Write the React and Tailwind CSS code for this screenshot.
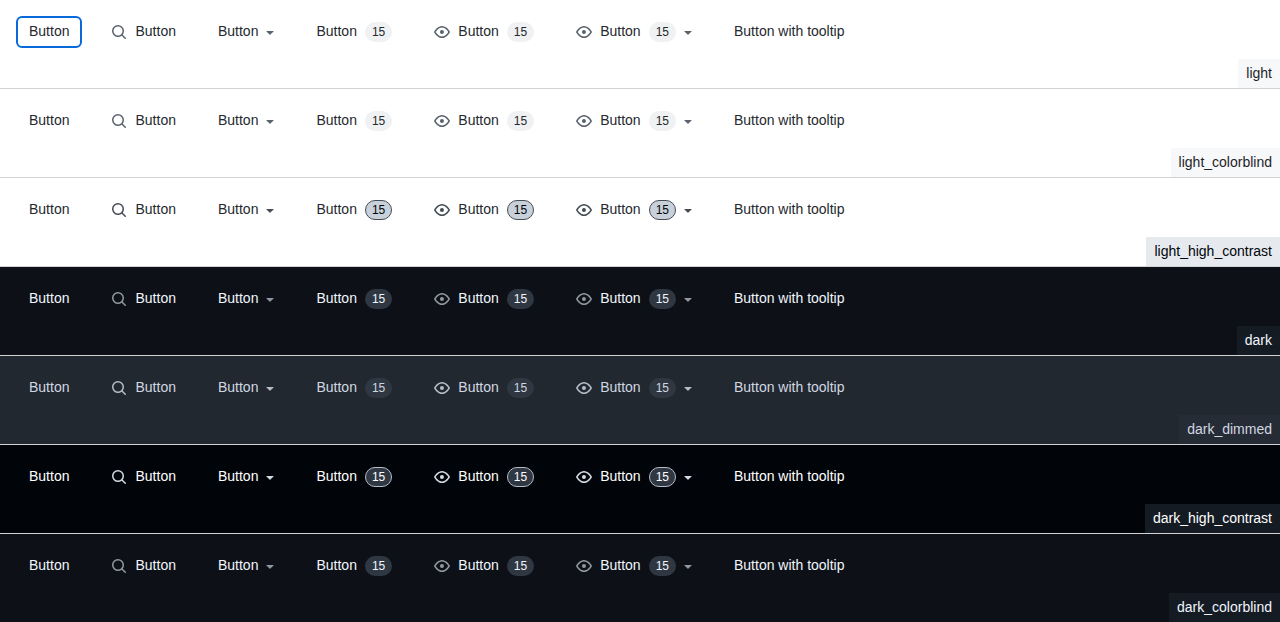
const themes = [
  { name: 'light', row: 'bg-white text-[#25292e]', icon: 'text-[#59636e]', counter: 'bg-[#eff1f2] border-transparent text-[#25292e]', label: 'bg-[#f6f8fa] text-[#1f2328]' },
  { name: 'light_colorblind', row: 'bg-white text-[#25292e]', icon: 'text-[#59636e]', counter: 'bg-[#eff1f2] border-transparent text-[#25292e]', label: 'bg-[#f6f8fa] text-[#1f2328]' },
  { name: 'light_high_contrast', row: 'bg-white text-[#25292e]', icon: 'text-[#454c54]', counter: 'bg-[#c8d1da] border-[#454c54] text-[#010409]', label: 'bg-[#e6eaef] text-[#010409]' },
  { name: 'dark', row: 'bg-[#0d1117] text-[#f0f6fc]', icon: 'text-[#9198a1]', counter: 'bg-[#2f3742] border-transparent text-[#f0f6fc]', label: 'bg-[#151b23] text-[#f0f6fc]' },
  { name: 'dark_dimmed', row: 'bg-[#212830] text-[#d1d7e0]', icon: 'text-[#b7bdc8]', counter: 'bg-[#2f3742] border-transparent text-[#d1d7e0]', label: 'bg-[#262c36] text-[#d1d7e0]' },
  { name: 'dark_high_contrast', row: 'bg-[#010409] text-white', icon: 'text-[#d4dbe3]', counter: 'bg-[#2f3742] border-[#b7bdc8] text-white', label: 'bg-[#151b23] text-white' },
  { name: 'dark_colorblind', row: 'bg-[#0d1117] text-[#f0f6fc]', icon: 'text-[#9198a1]', counter: 'bg-[#2f3742] border-transparent text-[#f0f6fc]', label: 'bg-[#151b23] text-[#f0f6fc]' },
];

const paths = {
  search: 'M10.68 11.74a6 6 0 0 1-7.922-8.982 6 6 0 0 1 8.982 7.922l3.04 3.04a.749.749 0 0 1-.326 1.275.749.749 0 0 1-.734-.215ZM11.5 7a4.499 4.499 0 1 0-8.997 0A4.499 4.499 0 0 0 11.5 7Z',
  eye: 'M8 2c1.981 0 3.671.992 4.933 2.078 1.27 1.091 2.187 2.345 2.637 3.023a1.62 1.62 0 0 1 0 1.798c-.45.678-1.367 1.932-2.637 3.023C11.67 13.008 9.981 14 8 14c-1.981 0-3.671-.992-4.933-2.078C1.797 10.83.88 9.576.43 8.898a1.62 1.62 0 0 1 0-1.798c.45-.677 1.367-1.931 2.637-3.022C4.33 2.992 6.019 2 8 2ZM1.679 7.932a.12.12 0 0 0 0 .136c.411.622 1.241 1.75 2.366 2.717C5.176 11.758 6.527 12.5 8 12.5c1.473 0 2.825-.742 3.955-1.715 1.124-.967 1.954-2.096 2.366-2.717a.12.12 0 0 0 0-.136c-.412-.621-1.242-1.75-2.366-2.717C10.824 4.242 9.473 3.5 8 3.5c-1.473 0-2.825.742-3.955 1.715-1.124.967-1.954 2.096-2.366 2.717ZM8 10a2 2 0 1 1-.001-3.999A2 2 0 0 1 8 10Z',
  caret: 'm4.427 7.427 3.396 3.396a.25.25 0 0 0 .354 0l3.396-3.396A.25.25 0 0 0 11.396 7H4.604a.25.25 0 0 0-.177.427Z',
};

function Icon({ name, className }) {
  return (
    <svg viewBox="0 0 16 16" width="16" height="16" fill="currentColor" className={`shrink-0 ${className}`} aria-hidden="true">
      <path d={paths[name]} />
    </svg>
  );
}

function Button({ theme, icon, count, caret, focused, children = 'Button' }) {
  return (
    <button
      type="button"
      className={`flex h-8 items-center rounded-md border border-transparent px-3 text-sm font-medium whitespace-nowrap ${focused ? 'outline-2 -outline-offset-2 outline-[#0969da]' : ''}`}
    >
      {icon && <Icon name={icon} className={`mr-2 ${theme.icon}`} />}
      <span className="pb-0.5 leading-5">{children}</span>
      {count && (
        <span className={`ml-2 rounded-full border px-1.5 text-xs leading-[18px] font-medium ${theme.counter}`}>{count}</span>
      )}
      {caret && <Icon name="caret" className={`-mr-1 ml-1 ${theme.icon}`} />}
    </button>
  );
}

function ThemeRow({ theme, first, last }) {
  return (
    <section className={`flex justify-between ${theme.row} ${last ? 'h-[88px]' : 'h-[89px] border-b border-[#d3d3d3]'}`}>
      <div className="flex items-start gap-4 p-4">
        <Button theme={theme} focused={first} />
        <Button theme={theme} icon="search" />
        <Button theme={theme} caret />
        <Button theme={theme} count="15" />
        <Button theme={theme} icon="eye" count="15" />
        <Button theme={theme} icon="eye" count="15" caret />
        <Button theme={theme}>Button with tooltip</Button>
      </div>
      <div className={`self-end px-2 py-1 text-sm leading-[21px] ${theme.label}`}>{theme.name}</div>
    </section>
  );
}

export default function App() {
  return (
    <main className="h-[622px] overflow-hidden font-['Liberation_Sans',Arial,sans-serif]">
      {themes.map((theme, i) => (
        <ThemeRow key={theme.name} theme={theme} first={i === 0} last={i === themes.length - 1} />
      ))}
    </main>
  );
}
